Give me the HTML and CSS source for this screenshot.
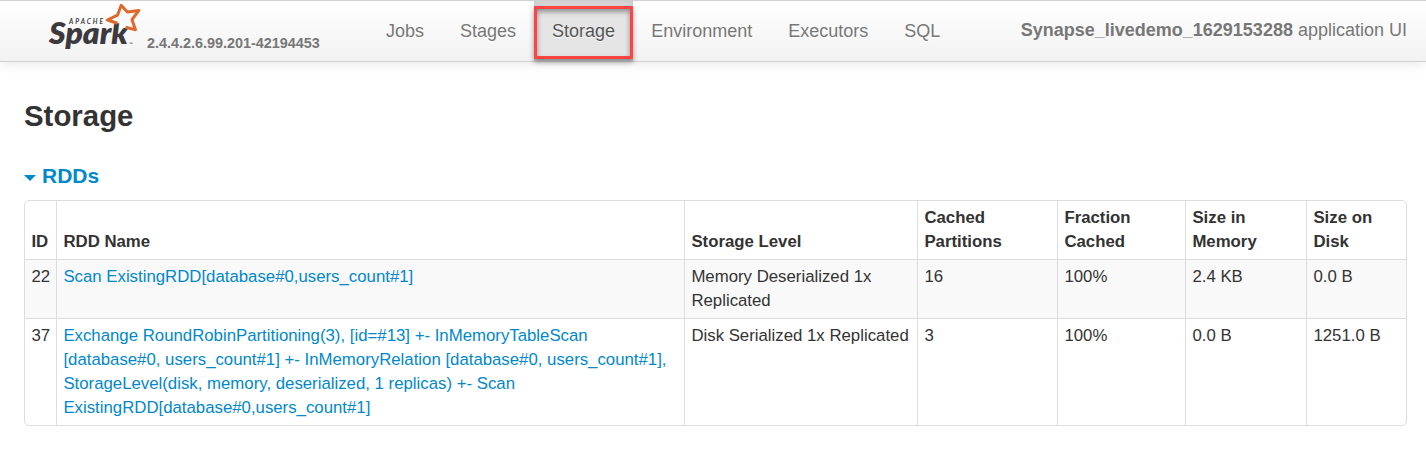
FILE: index.html
```html
<!DOCTYPE html>
<html lang="en">
<head>
<meta charset="utf-8">
<title>Storage</title>
<link rel="stylesheet" href="styles.css">
</head>
<body>
<header class="navbar">
  <a class="brand">
    <svg class="logo" width="94" height="60" viewBox="0 0 94 60" role="img" aria-label="Apache Spark">
      <g fill="#3c3a3e">
        <text class="word" x="1" y="44.3" textLength="79" lengthAdjust="spacingAndGlyphs">Spark</text>
        <text class="apache" x="21" y="24.4" textLength="34">APACHE</text>
        <text class="tm" x="81" y="45.5">™</text>
      </g>
      <path fill="#f9f9f9" d="M59.3 20 L69.5 15.2 L73.2 5.3 L79.3 12 L90.8 10.5 L84 19.7 L87.5 29.7 L77.5 27.2 L76 21 L70 23.5Z"/>
      <path fill="none" stroke="#dd6a2c" stroke-width="3" stroke-linejoin="round" d="M69.5 23.3 L59.3 20 L69.5 15.2 L73.2 5.3 L79.3 12 L90.8 10.5 L84 19.7 L87.5 29.7 L77.5 27.2"/>
    </svg>
    <span class="version">2.4.4.2.6.99.201-42194453</span>
  </a>
  <nav class="nav">
    <a class="tab">Jobs</a><a class="tab">Stages</a><a class="tab active">Storage<span class="highlight"></span></a><a class="tab">Environment</a><a class="tab">Executors</a><a class="tab">SQL</a>
  </nav>
  <p class="app"><strong>Synapse_livedemo_1629153288</strong> application UI</p>
</header>
<main class="content">
  <h3 class="title">Storage</h3>
  <h4 class="section"><span class="arrow"></span><a>RDDs</a></h4>
  <table class="rdds">
    <colgroup><col class="c1"><col class="c2"><col class="c3"><col class="c4"><col class="c5"><col class="c6"><col class="c7"></colgroup>
    <thead>
      <tr><th>ID</th><th>RDD Name</th><th>Storage Level</th><th>Cached<br>Partitions</th><th>Fraction<br>Cached</th><th>Size in<br>Memory</th><th>Size on<br>Disk</th></tr>
    </thead>
    <tbody>
      <tr class="odd"><td>22</td><td><a>Scan ExistingRDD[database#0,users_count#1]</a></td><td>Memory Deserialized 1x<br>Replicated</td><td>16</td><td>100%</td><td>2.4 KB</td><td>0.0 B</td></tr>
      <tr><td>37</td><td><a>Exchange RoundRobinPartitioning(3), [id=#13] +- InMemoryTableScan<br>[database#0, users_count#1] +- InMemoryRelation [database#0, users_count#1],<br>StorageLevel(disk, memory, deserialized, 1 replicas) +- Scan<br>ExistingRDD[database#0,users_count#1]</a></td><td>Disk Serialized 1x Replicated</td><td>3</td><td>100%</td><td>0.0 B</td><td>1251.0 B</td></tr>
    </tbody>
  </table>
</main>
</body>
</html>
```
FILE: styles.css
```css
* { box-sizing: border-box; }
body {
  margin: 0;
  background: #fff;
  color: #333;
  font: 16.8px/24px "Liberation Sans", Arial, sans-serif;
  overflow: hidden;
}
a { color: #0088cc; }
.navbar {
  display: flex;
  height: 62px;
  padding: 0 19px 0 48px;
  border-top: 1px solid #d0d0d0;
  border-bottom: 1px solid #d0d0d0;
  background: linear-gradient(#fff, #f2f2f2);
  box-shadow: 0 1px 12px rgba(0, 0, 0, 0.1);
  color: #777;
}
.brand { display: flex; width: 320px; color: #777; }
.logo { margin-top: -1px; flex: none; }
.word { font: italic 800 31px Lato, sans-serif; }
.apache { font: italic 700 6.6px Lato, sans-serif; }
.tm { font: 5px Lato, sans-serif; }
.version { margin: 30px 0 0 5px; font-size: 14.4px; line-height: 24px; font-weight: bold; width: 173px; white-space: nowrap; }
.nav { display: flex; font-size: 18px; }
.tab { position: relative; padding: 18px 18px; color: #777; text-shadow: 0 1px 0 #fff; }
.active {
  color: #555;
  background: #e5e5e5;
  box-shadow: inset 0 3px 9px rgba(0, 0, 0, 0.125);
}
.highlight {
  position: absolute;
  inset: 5px 0 2px;
  border: 3px solid #fc4442;
  box-shadow: 0 3px 5px rgba(0, 0, 0, 0.4), inset 0 3px 5px rgba(0, 0, 0, 0.35);
}
.app { margin: 17px 0 0 auto; font-size: 18px; white-space: nowrap; }
.content { padding: 30px 19px 0 24px; }
.title { margin: 0; font-size: 29.4px; line-height: 48px; }
.section {
  display: flex;
  align-items: center;
  gap: 6px;
  margin: 24px 0 12px;
  font-size: 21px;
  line-height: 24px;
}
.arrow {
  margin-top: 4px;
  border: 6px solid transparent;
  border-top-color: #0088cc;
  border-bottom: 0;
}
.rdds {
  width: 1383px;
  table-layout: fixed;
  border: 1px solid #ddd;
  border-collapse: separate;
  border-spacing: 0;
  border-radius: 5px;
}
.c1 { width: 31px; }
.c2 { width: 628px; }
.c3 { width: 233px; }
.c4 { width: 140px; }
.c5 { width: 128px; }
.c6 { width: 121px; }
.c7 { width: 100px; }
th, td { padding: 5px 0 5px 6.4px; text-align: left; vertical-align: top; white-space: nowrap; }
th { vertical-align: bottom; }
th + th, td + td { border-left: 1px solid #ddd; }
td { border-top: 1px solid #ddd; }
.odd td { background: #f9f9f9; }
```
